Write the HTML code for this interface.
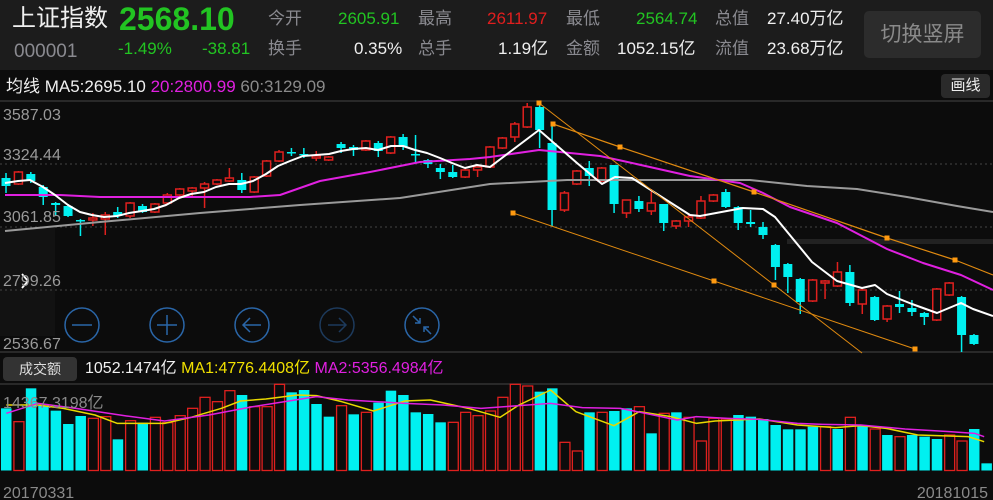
<!DOCTYPE html>
<html><head><meta charset="utf-8">
<style>
*{margin:0;padding:0;box-sizing:border-box}
body{width:993px;height:500px;overflow:hidden;background:#0c0c0c;font-family:"Liberation Sans","Noto Sans CJK SC",sans-serif;position:relative}
.hd{position:absolute;left:0;top:0;width:993px;height:70px;background:#1c1c1c}
.t{position:absolute;white-space:nowrap;line-height:1}
.g{color:#22c422}.r{color:#e01e1e}.w{color:#f0f0f0}.gr{color:#8a8a90}
.r1{top:10px;font-size:17px}.r2{top:40px;font-size:17px}
.rt{text-align:right}
</style></head><body>
<div class="hd"></div>
<div class="t w" style="left:12px;top:7px;font-size:24px">上证指数</div>
<div class="t g" style="left:119px;top:3px;font-size:32px;font-weight:bold">2568.10</div>
<div class="t gr" style="left:14px;top:42px;font-size:19px">000001</div>
<div class="t g r2" style="left:118px">-1.49%</div>
<div class="t g r2" style="left:202px">-38.81</div>
<div class="t gr r1" style="left:268px">今开</div>
<div class="t gr r2" style="left:268px">换手</div>
<div class="t g r1" style="left:338px">2605.91</div>
<div class="t w r2" style="left:354px">0.35%</div>
<div class="t gr r1" style="left:418px">最高</div>
<div class="t gr r2" style="left:418px">总手</div>
<div class="t r r1" style="left:487px">2611.97</div>
<div class="t w r2" style="left:498px">1.19亿</div>
<div class="t gr r1" style="left:566px">最低</div>
<div class="t gr r2" style="left:566px">金额</div>
<div class="t g r1" style="left:636px">2564.74</div>
<div class="t w r2" style="left:617px">1052.15亿</div>
<div class="t gr r1" style="left:715px">总值</div>
<div class="t gr r2" style="left:715px">流值</div>
<div class="t w r1" style="left:767px">27.40万亿</div>
<div class="t w r2" style="left:767px">23.68万亿</div>
<div style="position:absolute;left:864px;top:11px;width:117px;height:47px;background:#2c2c2c;border-radius:5px;color:#8a8a8a;font-size:21px;line-height:47px;text-align:center">切换竖屏</div>
<div class="t w" style="left:6px;top:78px;font-size:17px">均线 MA5:2695.10 <span style="color:#e020e0">20:2800.99</span> <span style="color:#8a8a8a">60:3129.09</span></div>
<div style="position:absolute;left:941px;top:74px;width:49px;height:24px;background:#2a2a2a;border-radius:4px;color:#eee;font-size:15px;line-height:24px;text-align:center">画线</div>
<div style="position:absolute;left:3px;top:357px;width:74px;height:24px;background:#333;border-radius:4px;color:#ddd;font-size:14px;line-height:24px;text-align:center">成交额</div>
<div class="t" style="left:85px;top:361px;font-size:16px;color:#f0f0f0">1052.1474亿 <span style="color:#f0e000">MA1:4776.4408亿</span> <span style="color:#e020e0">MA2:5356.4984亿</span></div>
<svg id="s" width="993" height="500" style="position:absolute;left:0;top:0"></svg>
<script>
var S='';
function L(x1,y1,x2,y2,c,w,extra){S+='<line x1="'+x1+'" y1="'+y1+'" x2="'+x2+'" y2="'+y2+'" stroke="'+c+'" stroke-width="'+(w||1)+'" '+(extra||'')+'/>';}
function P(pts,c,w){S+='<polyline fill="none" stroke="'+c+'" stroke-width="'+w+'" stroke-linejoin="round" points="'+pts.map(function(p){return p[0]+','+p[1]}).join(' ')+'"/>';}
S+='<rect x="0" y="228" width="55" height="108" fill="#121212"/>';
L(0,101,993,101,'#333',1.5);L(0,352,993,352,'#333',1.5);
[164,227,290].forEach(function(y){L(0,y,993,y,'#444',1,'stroke-dasharray="2,3"');});
S+='<rect x="787" y="239" width="206" height="5" fill="#222"/>';
// candles: [color c/r, bodyTop, bodyBot, wickTop, wickBot]
var C=[['c',178,186,173,193],['r',172,184,171,185],['c',174,181,172,183],['c',187,197,185,205],['c',203,205,202,216],['c',206,216,204,217],['c',220,221,219,236],['r',218,220,213,226],['r',215,219,212,235],['c',212,216,207,218],['r',203,216,202,218],['c',206,212,204,213],['r',204,212,203,213],['r',195,203,193,204],['r',189,195,188,196],['r',188,191,187,197],['r',184,188,182,208],['r',180,184,179,185],['r',178,181,168,182],['c',180,190,173,193],['r',177,192,176,193],['r',161,176,160,177],['r',152,161,150,162],['c',152,153,148,156],['c',154,155,148,158],['r',156,158,151,161],['r',157,160,156,161],['c',144,148,142,153],['c',147,150,145,156],['r',141,150,140,151],['c',143,151,141,157],['r',137,153,136,154],['c',137,147,134,150],['c',154,155,135,163],['c',160,164,159,168],['c',168,172,164,179],['c',172,177,165,178],['r',170,177,169,178],['r',167,170,165,177],['r',147,167,146,168],
['r',138,148,137,149],['r',124,137,122,142],['r',107,127,103,128],['c',107,130,103,148],['c',143,210,123,226],['r',193,210,191,212],['r',171,184,170,185],['c',168,176,161,186],['r',168,181,167,182],['c',165,204,167,213],['r',200,213,200,218],['c',201,209,196,212],['r',203,211,189,215],['c',204,223,204,231],['r',221,226,220,229],['r',217,221,214,227],['r',201,218,196,219],['r',195,201,194,202],['c',192,207,189,208],['c',207,223,206,230],['c',222,224,210,227],['c',227,235,222,239],['c',245,267,244,280],['c',264,277,263,293],['c',279,302,278,314],['r',280,301,279,302],['r',281,283,280,299],['r',272,286,262,287],['c',272,303,265,306],['r',290,304,289,314],['c',297,320,296,321],['r',306,319,305,322],['c',304,307,291,313],['c',308,312,300,316],['c',313,317,312,325],['r',289,320,288,321],['r',283,295,282,296],['c',297,335,296,352],['c',335,344,334,345]];
C.forEach(function(d,i){var x=6+i*12.41,col=d[0]=='c'?'#00f0f0':'#e0201e';
L(x,d[3],x,d[4],col,1.5);
var h=Math.max(d[2]-d[1],1.5);
if(d[0]=='c')S+='<rect x="'+(x-4.5)+'" y="'+d[1]+'" width="9" height="'+h+'" fill="'+col+'"/>';
else S+='<rect x="'+(x-4)+'" y="'+d[1]+'" width="8" height="'+h+'" fill="#0c0c0c" stroke="'+col+'" stroke-width="1.5"/>';});
P([[5,231],[100,222],[200,213],[300,205],[400,198],[490,184],[567,180],[750,180],[807,186],[857,189],[907,197],[957,206],[993,212]],'#9a9a9a',2);
P([[5,195],[60,195],[100,197],[250,197],[280,195],[320,181],[370,172],[420,162],[470,159],[490,157],[539,150],[570,153],[600,156],[623,161],[690,176],[740,183],[763,193],[790,207],[837,223],[887,249],[923,263],[961,275],[993,290]],'#e020e0',2);
P([[5,183],[18,181],[30,180],[43,187],[55,195],[68,205],[80,212],[92,215],[104,217],[117,216],[129,213],[142,211],[154,209],[166,205],[179,198],[191,194],[204,192],[216,187],[229,184],[241,184],[253,181],[266,174],[278,166],[290,161],[303,156],[316,155],[329,154],[341,151],[353,149],[366,148],[378,150],[391,146],[403,146],[415,150],[427,153],[440,158],[452,163],[465,168],[477,165],[490,167],[539,130],[577,163],[602,184],[615,177],[632,178],[690,215],[700,216],[743,208],[763,209],[775,217],[812,262],[837,281],[862,288],[875,285],[887,294],[912,304],[937,313],[961,303],[973,309],[993,316]],'#ffffff',2);
var O='#e08a10';
L(539,103,862,353,O,1);
P([[553,124],[620,147],[754,192],[887,238],[955,260],[993,275]],O,1.2);
L(513,213,915,349,O,1);
[[539,103],[553,124],[620,147],[754,192],[887,238],[955,260],[513,213],[714,281],[915,349],[774,285]].forEach(function(p){S+='<rect x="'+(p[0]-2.5)+'" y="'+(p[1]-2.5)+'" width="5" height="5" fill="#ff9a10"/>';});
// nav buttons
[82,167,252,337,422].forEach(function(cx,i){var c=i==3?'#1d3a5c':'#2a66a8';S+='<circle cx="'+cx+'" cy="325" r="17" fill="none" stroke="'+c+'" stroke-width="1.5"/>';
var g='stroke="'+c+'" stroke-width="1.5" fill="none"';
if(i==0)S+='<path d="M72 325h20" '+g+'/>';
if(i==1)S+='<path d="M157 325h20M167 315v20" '+g+'/>';
if(i==2)S+='<path d="M243 325h18M250 318l-7 7 7 7" '+g+'/>';
if(i==3)S+='<path d="M328 325h18M339 318l7 7-7 7" '+g+'/>';
if(i==4)S+='<path d="M413 316l7 7M420 318v5h-5M431 334l-7-7M424 332v-5h5" '+g+'/>';});
S+='<path d="M22 274l6 7-6 7" stroke="#fff" stroke-width="1.8" fill="none"/>';
// price labels
[['3587.03',120],['3324.44',160],['3061.85',222],['2799.26',286],['2536.67',349]].forEach(function(p){S+='<text x="3" y="'+p[1]+'" fill="#9a9a9a" font-size="16" font-family="Liberation Sans">'+p[0]+'</text>';});
// volume
L(0,384,993,384,'#333',1.5);
var V=[['c',160],['r',200],['c',100],['c',152],['c',167],['c',207],['c',183],['r',190],['r',185],['c',253],['r',197],['c',203],['r',187],['r',203],['r',182],['r',160],['r',127],['r',140],['r',107],['c',120],['r',155],['r',155],['r',88],['c',112],['c',105],['c',147],['c',185],['r',152],['c',178],['r',172],['c',143],['c',107],['c',120],['c',172],['c',177],['c',202],['r',202],['r',172],['r',182],['r',168],['r',127],['r',88],['r',93],['c',110],['c',100],['r',262],['r',288],['c',172],['r',172],['c',168],['c',160],['r',155],['c',235],['r',175],['c',172],['r',187],['r',258],['r',190],['r',192],['c',180],['c',185],['c',192],['c',210],['c',223],['c',223],['c',215],['r',215],['c',222],['r',187],['c',213],['r',222],['c',240],['r',245],['c',240],['c',245],['c',252],['r',240],['r',258],['c',222],['c',325]];
V.forEach(function(d,i){var x=i*12.41+1,y=d[1]/3+355,h=470.5-y;
if(d[0]=='c')S+='<rect x="'+x+'" y="'+y+'" width="10.5" height="'+h+'" fill="#00f0f0"/>';
else S+='<rect x="'+(x+0.5)+'" y="'+y+'" width="10" height="'+h+'" fill="none" stroke="#e0201e" stroke-width="1.3"/>';});
function vp(a){return a.map(function(p){return [p[0]/1.58,p[1]/3+355]});}
P(vp([[10,150],[60,150],[100,160],[150,180],[185,205],[260,205],[300,188],[350,160],[380,138],[420,132],[470,120],[500,122],[540,140],[590,168],[640,138],[680,135],[740,160],[790,187],[820,150],[870,105],[910,170],[970,212],[1010,170],[1060,185],[1100,205],[1130,198],[1200,192],[1260,210],[1320,218],[1360,212],[1400,220],[1450,240],[1530,245],[1555,260]]),'#e8d800',1.5);
P(vp([[10,175],[60,145],[120,160],[200,183],[260,198],[330,180],[400,155],[450,140],[500,125],[550,135],[640,145],[700,150],[760,160],[820,152],[870,145],[920,158],[980,160],[1020,175],[1070,195],[1100,185],[1150,190],[1200,193],[1260,205],[1300,208],[1360,210],[1430,222],[1500,230],[1540,235],[1555,245]]),'#e020e0',1.5);
S+='<text x="3" y="408" fill="#8a8a8a" font-size="16" font-family="Liberation Sans,Noto Sans CJK SC">14367.3198亿</text>';
S+='<text x="3" y="498" fill="#8a8a8a" font-size="16" font-family="Liberation Sans">20170331</text>';
S+='<text x="988" y="498" text-anchor="end" fill="#8a8a8a" font-size="16" font-family="Liberation Sans">20181015</text>';
document.getElementById('s').innerHTML=S;
</script>
</body></html>
